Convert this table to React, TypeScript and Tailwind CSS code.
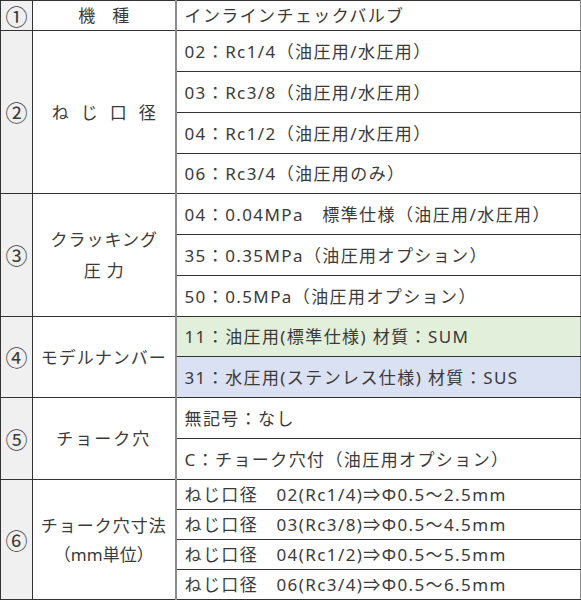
import React from "react";

const cell = "border border-[#333] text-[#3a3a3a]";
const num = `${cell} bg-[#f0f0f0] text-center align-middle text-[22px]`;
const label = `${cell} bg-white text-center align-middle border-r-2 border-r-[#8c8c8c]`;
const val = `${cell} pl-2 whitespace-nowrap tracking-[1.4px] border-r-[#8c8c8c]`;

export default function App() {
  return (
    <div className="w-[581px] h-[600px] bg-white overflow-hidden">
      <table
        className="w-[581px] table-fixed border-collapse text-[17px] leading-none"
        style={{ fontFamily: '"Noto Sans", "Noto Sans CJK JP", sans-serif' }}
      >
        <colgroup>
          <col className="w-[32px]" />
          <col className="w-[143px]" />
          <col />
        </colgroup>
        <tbody>
          <tr className="h-[30px]">
            <td className={num}>①</td>
            <td className={label}>機　種</td>
            <td className={val}>インラインチェックバルブ</td>
          </tr>

          <tr className="h-[41px]">
            <td rowSpan={4} className={num}>②</td>
            <td rowSpan={4} className={`${label} tracking-[12px] pl-[12px]`}>ねじ口径</td>
            <td className={val}>02：Rc1/4（油圧用/水圧用）</td>
          </tr>
          <tr className="h-[41px]">
            <td className={val}>03：Rc3/8（油圧用/水圧用）</td>
          </tr>
          <tr className="h-[41px]">
            <td className={val}>04：Rc1/2（油圧用/水圧用）</td>
          </tr>
          <tr className="h-[40px]">
            <td className={val}>06：Rc3/4（油圧用のみ）</td>
          </tr>

          <tr className="h-[41px]">
            <td rowSpan={3} className={num}>③</td>
            <td rowSpan={3} className={label}>
              <div className="flex flex-col items-center gap-[14px]">
                <span className="tracking-[1px] pl-[1px]">クラッキング</span>
                <span className="tracking-[6px] pl-[6px]">圧力</span>
              </div>
            </td>
            <td className={val}>04：0.04MPa　標準仕様（油圧用/水圧用）</td>
          </tr>
          <tr className="h-[41px]">
            <td className={val}>35：0.35MPa（油圧用オプション）</td>
          </tr>
          <tr className="h-[41px]">
            <td className={val}>50：0.5MPa（油圧用オプション）</td>
          </tr>

          <tr className="h-[40px]">
            <td rowSpan={2} className={num}>④</td>
            <td rowSpan={2} className={`${label} tracking-[1px]`}>モデルナンバー</td>
            <td className={`${val} bg-[#e2efda]`}>11：油圧用(標準仕様) 材質：SUM</td>
          </tr>
          <tr className="h-[41px]">
            <td className={`${val} bg-[#d9e1f2]`}>31：水圧用(ステンレス仕様) 材質：SUS</td>
          </tr>

          <tr className="h-[41px]">
            <td rowSpan={2} className={num}>⑤</td>
            <td rowSpan={2} className={`${label} tracking-[2px]`}>チョーク穴</td>
            <td className={val}>無記号：なし</td>
          </tr>
          <tr className="h-[41px]">
            <td className={val}>C：チョーク穴付（油圧用オプション）</td>
          </tr>

          <tr className="h-[30px]">
            <td rowSpan={4} className={num}>⑥</td>
            <td rowSpan={4} className={label}>
              <div className="flex flex-col items-center gap-[12px]">
                <span className="tracking-[1px]">チョーク穴寸法</span>
                <span>（mm単位）</span>
              </div>
            </td>
            <td className={val}>ねじ口径　02(Rc1/4)⇒Φ0.5～2.5mm</td>
          </tr>
          <tr className="h-[30px]">
            <td className={val}>ねじ口径　03(Rc3/8)⇒Φ0.5～4.5mm</td>
          </tr>
          <tr className="h-[30px]">
            <td className={val}>ねじ口径　04(Rc1/2)⇒Φ0.5～5.5mm</td>
          </tr>
          <tr className="h-[30px]">
            <td className={val}>ねじ口径　06(Rc3/4)⇒Φ0.5～6.5mm</td>
          </tr>
        </tbody>
      </table>
    </div>
  );
}
